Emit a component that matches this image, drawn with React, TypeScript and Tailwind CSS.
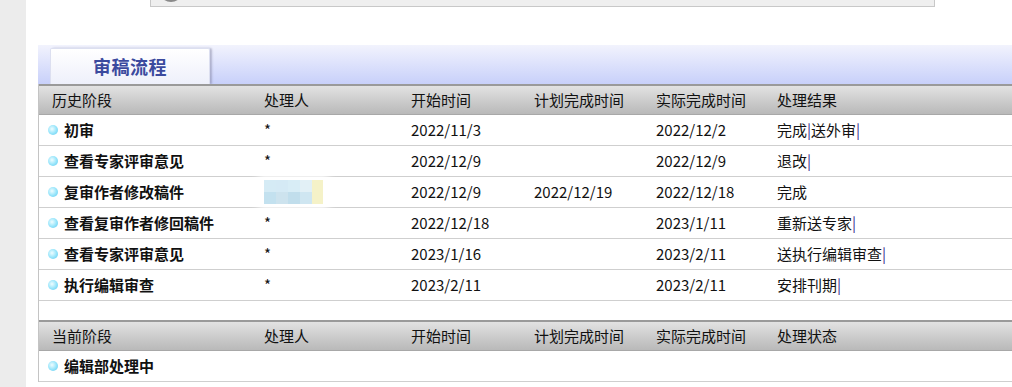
import React from "react";

type Row = {
  stage: string;
  handler: string;
  start: string;
  plan: string;
  done: string;
  result: string[];
};

// history rows; result parts are split by the purple separator bar
const history: Row[] = [
  { stage: "初审", handler: "*", start: "2022/11/3", plan: "", done: "2022/12/2", result: ["完成", "送外审", ""] },
  { stage: "查看专家评审意见", handler: "*", start: "2022/12/9", plan: "", done: "2022/12/9", result: ["退改", ""] },
  { stage: "复审作者修改稿件", handler: "blur", start: "2022/12/9", plan: "2022/12/19", done: "2022/12/18", result: ["完成"] },
  { stage: "查看复审作者修回稿件", handler: "*", start: "2022/12/18", plan: "", done: "2023/1/11", result: ["重新送专家", ""] },
  { stage: "查看专家评审意见", handler: "*", start: "2023/1/16", plan: "", done: "2023/2/11", result: ["送执行编辑审查", ""] },
  { stage: "执行编辑审查", handler: "*", start: "2023/2/11", plan: "", done: "2023/2/11", result: ["安排刊期", ""] },
];

const font = "font-['Microsoft_YaHei','Noto_Sans_CJK_SC',sans-serif]";

function Bullet() {
  return (
    <span className="inline-block w-[10px] h-[10px] rounded-full bg-[radial-gradient(circle_at_40%_40%,#f0fdff_0%,#9be6fb_50%,#5cc8ee_100%)] mr-[6px] shrink-0" />
  );
}

function Blurred() {
  const top = ["#d5ebf5", "#d5eaf5", "#d8edf6", "#e2f0f6"];
  const bottom = ["#c3e1ef", "#cde3ee", "#c1deec", "#cfe6f1"];
  return (
    <div className="flex flex-col shadow-[0_0_8px_6px_rgba(255,255,255,0.9)]">
      {[top, bottom].map((r, i) => (
        <div key={i} className="flex">
          {r.map((c, j) => (
            <div key={j} className="w-[12px] h-[12px]" style={{ backgroundColor: c }} />
          ))}
          <div className="w-[11px] h-[12px] bg-[#f5f2c8]" />
        </div>
      ))}
    </div>
  );
}

function Cells({ cols, header }: { cols: React.ReactNode[]; header?: boolean }) {
  return (
    <>
      <div className={`w-[225px] shrink-0 flex items-center ${header ? "pl-[13px]" : "pl-[9px]"}`}>{cols[0]}</div>
      <div className="w-[147px] shrink-0 flex items-center">{cols[1]}</div>
      <div className="w-[123px] shrink-0">{cols[2]}</div>
      <div className="w-[122px] shrink-0">{cols[3]}</div>
      <div className="w-[121px] shrink-0">{cols[4]}</div>
      <div className="flex-1">{cols[5]}</div>
    </>
  );
}

function HeaderRow({ labels }: { labels: string[] }) {
  return (
    <div className="flex items-center h-[31px] border-t-2 border-[#9a9a9a] border-b border-b-[#a8a8a8] bg-gradient-to-b from-[#e2e2e2] to-[#b9b9b9] text-[15px] text-[#111]">
      <Cells header cols={labels} />
    </div>
  );
}

function Result({ parts }: { parts: string[] }) {
  return (
    <span>
      {parts.map((p, i) => (
        <React.Fragment key={i}>
          {i > 0 && <span className="text-[#3a2a8c]">|</span>}
          {p}
        </React.Fragment>
      ))}
    </span>
  );
}

export default function App() {
  return (
    <div className={`flex w-[1012px] h-[387px] overflow-hidden bg-white ${font}`}>
      <div className="w-[26px] shrink-0 bg-[#ececec]" />
      <div className="flex-1 flex flex-col">
        {/* bottom of the panel above */}
        <div className="ml-[124px] w-[785px] h-[7px] bg-[#efefef] border border-t-0 border-[#c8c8c8] relative overflow-hidden">
          <div className="absolute left-[8px] -top-[24px] w-[24px] h-[26px] rounded-full bg-[#d6d6d6] border-b-2 border-[#8a8a8a]" />
        </div>

        <div className="ml-[12px] mt-[38px] flex flex-col">
          {/* banner with tab */}
          <div className="h-[39px] bg-gradient-to-b from-[#f2f3fd] to-[#c8d0fa] flex items-end pl-[12px]">
            <div className="w-[160px] h-[36px] bg-gradient-to-b from-white to-[#eef0fb] border border-b-0 border-[#dcdff0] shadow-[2px_0_2px_rgba(120,120,150,0.45)] rounded-t-[2px] flex items-center justify-center">
              <span className="text-[18px] font-bold text-[#3b4a9e] tracking-[0.5px]">审稿流程</span>
            </div>
          </div>

          <div className="border-l border-[#c4c4c4]">
            <HeaderRow labels={["历史阶段", "处理人", "开始时间", "计划完成时间", "实际完成时间", "处理结果"]} />
            {history.map((r, i) => (
              <div key={i} className="flex items-center h-[31px] border-b border-[#cfcfcf] text-[15px] text-[#111]">
                <Cells
                  cols={[
                    <>
                      <Bullet />
                      <span className="font-bold">{r.stage}</span>
                    </>,
                    r.handler === "blur" ? <Blurred /> : <span>{r.handler}</span>,
                    r.start,
                    r.plan,
                    r.done,
                    <Result parts={r.result} />,
                  ]}
                />
              </div>
            ))}
            <div className="h-[19px]" />
            <HeaderRow labels={["当前阶段", "处理人", "开始时间", "计划完成时间", "实际完成时间", "处理状态"]} />
            <div className="flex items-center h-[31px] border-b border-[#cfcfcf] text-[15px] text-[#111]">
              <Cells
                cols={[
                  <>
                    <Bullet />
                    <span className="font-bold">编辑部处理中</span>
                  </>,
                  "",
                  "",
                  "",
                  "",
                  "",
                ]}
              />
            </div>
          </div>
        </div>
      </div>
    </div>
  );
}
